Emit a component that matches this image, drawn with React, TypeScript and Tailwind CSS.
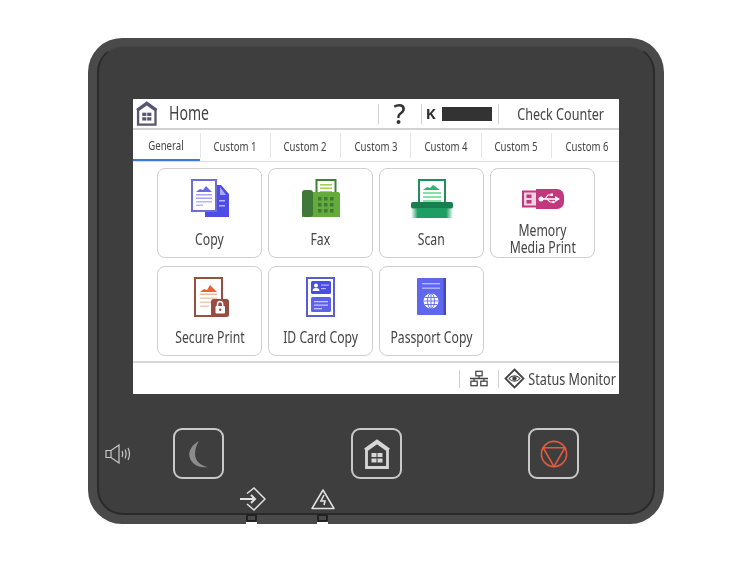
import type { ReactNode } from 'react';

const Narrow = ({ children, className = '' }: { children: ReactNode; className?: string }) => (
  <span className={`inline-block shrink-0 whitespace-nowrap scale-x-[0.74] font-['Noto_Sans',sans-serif] text-[#444] ${className}`}>
    {children}
  </span>
);

const HomeGlyph = ({ width, height, color }: { width: number; height: number; color: string }) => (
  <svg width={width} height={height} viewBox="0 0 26 30" fill="none">
    <path d="M2.500 28.500V11L13 3.500 23.500 11v17.500z" stroke={color} strokeWidth="2.800" />
    <path d="M.8 10.500 13 1.500l12.200 9" stroke={color} strokeWidth="2.200" />
    <rect x="7.500" y="14" width="5" height="4" fill={color} />
    <rect x="13.500" y="14" width="5" height="4" fill={color} />
    <rect x="7.500" y="19.500" width="5" height="4" fill={color} />
    <rect x="13.500" y="19.500" width="5" height="4" fill={color} />
  </svg>
);

const CopyIcon = () => (
  <svg className="ml-[2px]" width="40" height="40" viewBox="0 0 40 40">
    <path d="M14 6h16l8 9v23H14z" fill="#4f4de8" />
    <path d="M29 8l6 8h-6z" fill="#a9a8f5" />
    <rect x="28" y="21" width="6" height="1.500" fill="#b9b8f8" />
    <rect x="28" y="26" width="6" height="1.500" fill="#b9b8f8" />
    <rect x="1" y="1" width="24" height="31" fill="#fff" stroke="#6d70d2" strokeWidth="2" />
    <path d="M5 13l4-3 3 1 3-4 3 3 3 3z" fill="#6a67ea" />
    <rect x="5" y="15" width="16" height="1.500" fill="#a5a6ee" />
    <rect x="5" y="18.500" width="16" height="1.500" fill="#a5a6ee" />
    <rect x="5" y="22" width="16" height="1.500" fill="#b8b9f2" />
    <rect x="5" y="25.500" width="7" height="1.500" fill="#b8b9f2" />
  </svg>
);

const FaxIcon = () => (
  <svg width="38" height="40" viewBox="0 0 38 40">
    <rect x="14.500" y="1" width="19" height="16" fill="#fff" stroke="#41803a" strokeWidth="2" />
    <rect x="18" y="5" width="12" height="1.600" fill="#a6cf5a" />
    <rect x="18" y="8.500" width="12" height="1.600" fill="#a6cf5a" />
    <rect x="18" y="12" width="12" height="1.600" fill="#a6cf5a" />
    <path d="M8 13h28a2 2 0 0 1 2 2v23H0V15z" fill="#65ab39" />
    <rect x="0" y="11" width="11" height="27" rx="3" fill="#40783a" />
    <g fill="#3f7a35">
      {[16, 22, 28].map((x) =>
        [18, 24, 30].map((y) => <rect key={`${x}-${y}`} x={x} y={y} width="3.500" height="3.500" />),
      )}
    </g>
  </svg>
);

const ScanIcon = () => (
  <svg width="42" height="40" viewBox="0 0 42 40">
    <defs>
      <linearGradient id="scanfade" x1="0" y1="0" x2="1" y2="0">
        <stop offset="0" stopColor="#1e9e62" stopOpacity="0" />
        <stop offset="0.16" stopColor="#1e9e62" />
        <stop offset="0.84" stopColor="#1e9e62" />
        <stop offset="1" stopColor="#1e9e62" stopOpacity="0" />
      </linearGradient>
    </defs>
    <rect x="8" y="1" width="26" height="26" fill="#fff" stroke="#1f8f5a" strokeWidth="2" />
    <path d="M12 11l4-3 3 1 3-3 3 2 4 3z" fill="#2fb36f" />
    <rect x="12" y="13" width="18" height="2" fill="#86e0a8" />
    <rect x="12" y="17" width="18" height="2" fill="#86e0a8" />
    <rect x="12" y="21" width="18" height="2" fill="#86e0a8" />
    <rect x="0" y="23" width="42" height="6.500" rx="2" fill="#157f4d" />
    <rect x="0" y="29" width="42" height="10" fill="url(#scanfade)" />
  </svg>
);

const MemoryIcon = () => (
  <svg width="42" height="20" viewBox="0 0 42 20">
    <rect x="1" y="2.500" width="14" height="15" fill="#f3d3e2" stroke="#c2387f" strokeWidth="2" />
    <rect x="4.500" y="5.500" width="5" height="3.500" fill="#c2387f" />
    <rect x="4.500" y="11" width="5" height="3.500" fill="#c2387f" />
    <path d="M14 0h21a7 7 0 0 1 7 7v6a7 7 0 0 1-7 7H14z" fill="#c2387f" />
    <path d="M18 10h17" stroke="#fff" strokeWidth="1.500" />
    <circle cx="19" cy="10" r="2.500" fill="#fff" />
    <path d="M33 7l5 3-5 3z" fill="#fff" />
    <path d="M23 10l3-4h3M25 10l3 3h3" stroke="#fff" strokeWidth="1.200" fill="none" />
    <rect x="28.500" y="4.500" width="2.500" height="2.500" fill="#fff" />
    <circle cx="31.500" cy="13" r="1.300" fill="#fff" />
  </svg>
);

const SecureIcon = () => (
  <svg className="ml-[5px]" width="36" height="40" viewBox="0 0 36 40">
    <rect x="1" y="1" width="27" height="38" fill="#fff" stroke="#95503f" strokeWidth="2" />
    <path d="M6 15l4-3 3 1 3-5 3 3 4 4z" fill="#ef5f36" />
    <rect x="6" y="16.500" width="17" height="1.500" fill="#f5b89b" />
    <rect x="6" y="20.500" width="17" height="1.500" fill="#f5c8b2" />
    <rect x="6" y="24.500" width="12" height="1.500" fill="#f5c8b2" />
    <rect x="6" y="28.500" width="9" height="1.500" fill="#f5c8b2" />
    <rect x="17" y="22" width="18" height="18" rx="2.500" fill="#964c40" />
    <rect x="21.500" y="29" width="9.500" height="7.500" rx="1" fill="#fff" />
    <path d="M23.500 29v-1.800a2.600 2.600 0 0 1 5.200 0V29" stroke="#fff" strokeWidth="1.500" fill="none" />
    <circle cx="26.200" cy="32.700" r="1.200" fill="#964c40" />
  </svg>
);

const IdIcon = () => (
  <svg width="30" height="40" viewBox="0 0 30 40">
    <rect x="1" y="1" width="27" height="38" fill="#fff" stroke="#5a5dd0" strokeWidth="2" />
    <rect x="5" y="4" width="20" height="13" rx="1.500" fill="#4b4be6" />
    <circle cx="10" cy="8.500" r="2" fill="#fff" />
    <path d="M6.500 14a3.500 3 0 0 1 7 0z" fill="#fff" />
    <rect x="15" y="7.500" width="8" height="1.200" fill="#b8b9f5" />
    <rect x="15" y="11" width="5" height="1.200" fill="#b8b9f5" />
    <rect x="5" y="20" width="20" height="15" rx="1.500" fill="#5c60ec" />
    <rect x="8" y="24" width="14" height="1.300" fill="#c3c5f8" />
    <rect x="8" y="27.500" width="14" height="1.300" fill="#c3c5f8" />
    <rect x="8" y="31" width="8" height="1.300" fill="#c3c5f8" />
  </svg>
);

const PassportIcon = () => (
  <svg width="30" height="38" viewBox="0 0 30 38">
    <rect x="0" y="0" width="29" height="37" rx="1" fill="#5f67ec" />
    <rect x="26.500" y="0" width="2.500" height="37" fill="#4449b8" />
    <rect x="5" y="5" width="18" height="1.400" fill="#b4b8f6" />
    <rect x="5" y="9.500" width="18" height="1.400" fill="#b4b8f6" />
    <circle cx="14" cy="23" r="7.500" fill="#fff" />
    <path d="M6.500 23h15M14 15.500v15M7.500 19.500h13M7.500 26.500h13" stroke="#5f67ec" strokeWidth="0.900" />
    <ellipse cx="14" cy="23" rx="3.500" ry="7.500" stroke="#5f67ec" strokeWidth="0.900" fill="none" />
  </svg>
);

const NetworkIcon = () => (
  <svg width="18" height="17" viewBox="0 0 20 18" fill="none" stroke="#444" strokeWidth="1.400">
    <rect x="6.500" y="1" width="7" height="5" />
    <rect x="1" y="12" width="7" height="5" />
    <rect x="12" y="12" width="7" height="5" />
    <path d="M10 6v3M0 9h20M4.500 9v3M15.500 9v3" />
  </svg>
);

const EyeIcon = () => (
  <svg width="21" height="21" viewBox="0 0 21 21" fill="none">
    <path d="M10.500 1.500l9 9-9 9-9-9z" stroke="#444" strokeWidth="1.800" />
    <path d="M5 10.500c3-3.600 8-3.600 11 0-3 3.600-8 3.600-11 0z" stroke="#444" strokeWidth="1.100" />
    <circle cx="10.500" cy="10.500" r="2.200" fill="#444" />
  </svg>
);

const tabs = ['General', 'Custom 1', 'Custom 2', 'Custom 3', 'Custom 4', 'Custom 5', 'Custom 6'];

const tiles: { label: string[]; icon: ReactNode }[] = [
  { label: ['Copy'], icon: <CopyIcon /> },
  { label: ['Fax'], icon: <FaxIcon /> },
  { label: ['Scan'], icon: <ScanIcon /> },
  { label: ['Memory', 'Media Print'], icon: <MemoryIcon /> },
  { label: ['Secure Print'], icon: <SecureIcon /> },
  { label: ['ID Card Copy'], icon: <IdIcon /> },
  { label: ['Passport Copy'], icon: <PassportIcon /> },
];

const Tile = ({ label, icon }: { label: string[]; icon: ReactNode }) => (
  <div className="flex h-[90px] w-[105px] flex-col items-center rounded-[8px] border border-[#cfcfcf] bg-white">
    <div className="flex h-[53px] w-full items-center justify-center pt-[7px]">{icon}</div>
    <div className="flex flex-1 flex-col items-center justify-center pb-[2px]">
      {label.map((line) => (
        <Narrow key={line} className="text-[16.500px] leading-[17px]">
          {line}
        </Narrow>
      ))}
    </div>
  </div>
);

const Screen = () => (
  <div className="flex h-[295px] w-[486px] flex-col bg-white">
    {/* Header */}
    <div className="flex h-[31px] items-center border-b-2 border-[#d2d2d2] pl-[3px]">
      <HomeGlyph width={22} height={25} color="#5a5570" />
      <div className="ml-[7px] flex w-[48px] justify-center">
        <Narrow className="text-[19px]">Home</Narrow>
      </div>
      <div className="ml-[165px] h-[20px] w-px bg-[#d0d0d0]" />
      <div className="flex w-[43px] justify-center">
        <span className="font-['Noto_Sans',sans-serif] text-[27px] leading-none font-medium text-[#333]">?</span>
      </div>
      <div className="h-[20px] w-px bg-[#d0d0d0]" />
      <span className="ml-[4px] font-['Noto_Sans',sans-serif] text-[15px] font-bold text-[#333]">K</span>
      <div className="ml-[6px] h-[14px] w-[51px] bg-[#333]" />
      <div className="ml-[6px] h-[20px] w-px bg-[#d0d0d0]" />
      <div className="flex flex-1 justify-center pl-[3px]">
        <Narrow className="text-[17px]">Check Counter</Narrow>
      </div>
    </div>
    {/* Tabs */}
    <div className="flex h-[32px] overflow-hidden border-b border-[#dcdcdc]">
      {tabs.map((tab, i) => (
        <div
          key={tab}
          className={
            i === 0
              ? 'flex w-[66.500px] shrink-0 items-center justify-center border-b-2 border-[#3b78d8] pt-[3px]'
              : 'my-[3px] flex w-[70.300px] shrink-0 items-center justify-center border-l border-[#e4e4e4] pt-[2px]'
          }
        >
          <Narrow className="text-[13px]">{tab}</Narrow>
        </div>
      ))}
    </div>
    {/* Function tiles */}
    <div className="grid flex-1 grid-cols-[105px_105px_105px_105px] content-start gap-x-[6px] gap-y-[8px] pt-[6px] pl-[24px]">
      {tiles.map((t) => (
        <Tile key={t.label.join(' ')} label={t.label} icon={t.icon} />
      ))}
    </div>
    {/* Status bar */}
    <div className="flex h-[33px] items-center justify-end border-t-2 border-[#d8d8d8] pr-[3px]">
      <div className="h-[18px] w-px bg-[#cfcfcf]" />
      <div className="mr-[10px] ml-[10px]">
        <NetworkIcon />
      </div>
      <div className="h-[18px] w-px bg-[#cfcfcf]" />
      <div className="ml-[5px]">
        <EyeIcon />
      </div>
      <div className="ml-[3px] flex w-[88px] justify-center">
        <Narrow className="text-[17px]">Status Monitor</Narrow>
      </div>
    </div>
  </div>
);

const PanelButton = ({ children }: { children: ReactNode }) => (
  <div className="flex h-[51px] w-[51px] items-center justify-center rounded-[9px] border-2 border-[#c9c9c9]">
    {children}
  </div>
);

const LedNotch = ({ className }: { className: string }) => (
  <div className={`absolute top-[476px] flex w-[11px] flex-col ${className}`}>
    <div className="h-[8px] rounded-[2px] border-2 border-[#222] bg-[#4a4a4a]" />
    <div className="h-[2px] bg-white" />
  </div>
);

export default function App() {
  return (
    <div className="h-[562px] w-[750px] overflow-hidden bg-white pt-[38px] pl-[88px] blur-[0.4px]">
      {/* Panel body */}
      <div className="relative h-[486px] w-[576px] rounded-[34px] bg-[#4a4a4a] px-[9px] pt-[8px] pb-[9px]">
        <div className="flex h-[469px] flex-col rounded-[26px] border-t border-r-2 border-b-2 border-l-2 border-[#2a2a2a] border-t-[#454545] bg-[#3e3e3e]">
          <div className="mt-[52px] ml-[34px]">
            <Screen />
          </div>
          <div className="mt-[34px] flex items-center pl-[6px]">
            <svg width="26" height="20" viewBox="0 0 26 20" fill="none" stroke="#c9c9c9" strokeWidth="1.200">
              <path d="M1 6.500h5L14 1v18l-8-5.500H1z" />
              <path d="M6 6.500v7" />
              <path d="M17 7c1 2 1 4 0 6M20 5.500c1.500 3 1.500 6 0 9M23 4c2 4 2 8 0 12" />
            </svg>
            <div className="ml-[42px]">
              <PanelButton>
                <svg className="mt-[3px]" width="20" height="28" viewBox="0 0 20 28">
                  <path d="M10 0C3 4 0 9 .3 14 .6 21 8 28 19 26 12 25 6 20 6 13 6 8 8 3 10 0z" fill="#8c8c8c" />
                </svg>
              </PanelButton>
            </div>
            <div className="ml-[127px]">
              <PanelButton>
                <HomeGlyph width={26} height={30} color="#d6d6d6" />
              </PanelButton>
            </div>
            <div className="ml-[126px]">
              <PanelButton>
                <svg width="28" height="28" viewBox="0 0 30 30" fill="none" stroke="#e05a40" strokeWidth="1.700">
                  <circle cx="15" cy="15" r="13.500" />
                  <path d="M3.400 8.300h23.200L15 28.500z" strokeLinejoin="round" />
                </svg>
              </PanelButton>
            </div>
          </div>
          <div className="mt-[8px] flex items-center pl-[141px]">
            <svg width="26" height="24" viewBox="0 0 26 24" fill="none" stroke="#e2e2e2" strokeWidth="1.500">
              <path d="M7 6.500L14 1l11 11-11 11-7-6" />
              <path d="M0 12h15M11 8l4 4-4 4" strokeWidth="2" />
            </svg>
            <svg className="ml-[45px]" width="24" height="22" viewBox="0 0 24 22" fill="none" stroke="#e2e2e2" strokeWidth="1.500">
              <path d="M12 2L23 20.500H1z" strokeLinejoin="round" />
              <path d="M13 7l-3 6h4l-1 4" strokeWidth="1.600" />
            </svg>
          </div>
        </div>
        {/* LED notches */}
        <LedNotch className="left-[158px]" />
        <LedNotch className="left-[229px]" />
      </div>
    </div>
  );
}
